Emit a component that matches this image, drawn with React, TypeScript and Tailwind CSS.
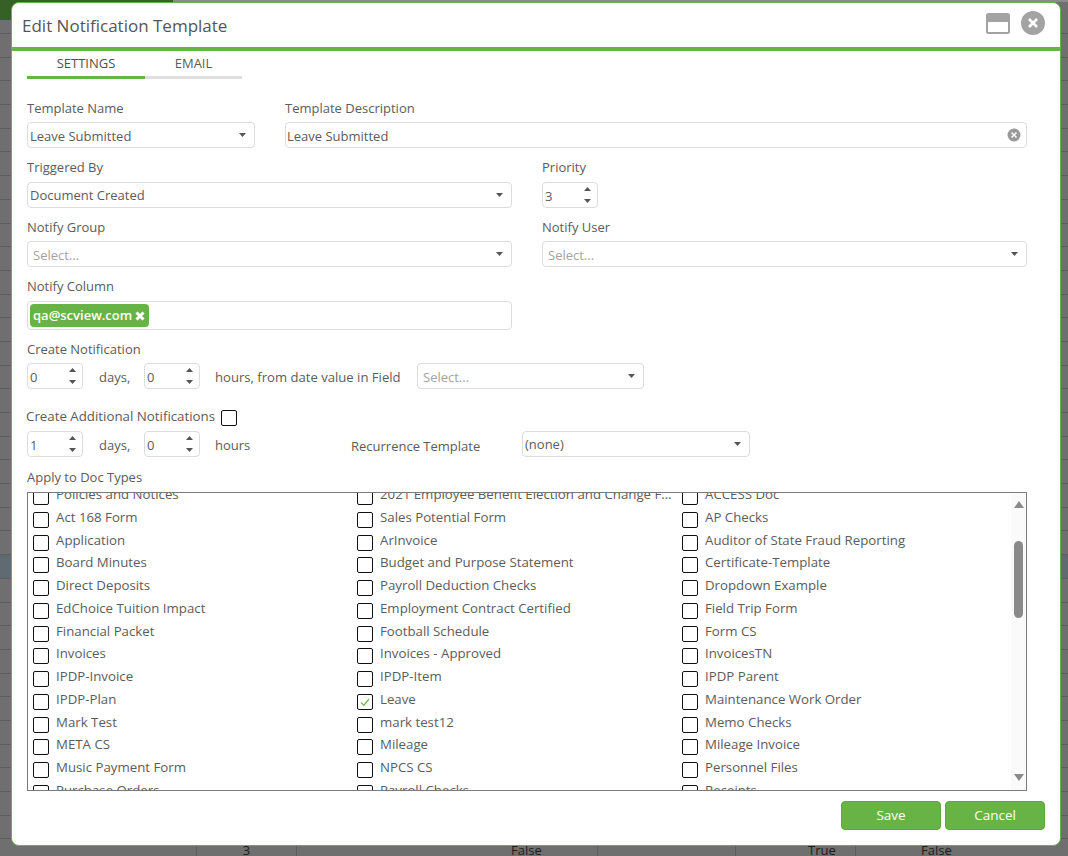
import React from "react";

const docTypes: string[][] = [
  ["Policies and Notices", "2021 Employee Benefit Election and Change Form", "ACCESS Doc"],
  ["Act 168 Form", "Sales Potential Form", "AP Checks"],
  ["Application", "ArInvoice", "Auditor of State Fraud Reporting"],
  ["Board Minutes", "Budget and Purpose Statement", "Certificate-Template"],
  ["Direct Deposits", "Payroll Deduction Checks", "Dropdown Example"],
  ["EdChoice Tuition Impact", "Employment Contract Certified", "Field Trip Form"],
  ["Financial Packet", "Football Schedule", "Form CS"],
  ["Invoices", "Invoices - Approved", "InvoicesTN"],
  ["IPDP-Invoice", "IPDP-Item", "IPDP Parent"],
  ["IPDP-Plan", "Leave", "Maintenance Work Order"],
  ["Mark Test", "mark test12", "Memo Checks"],
  ["META CS", "Mileage", "Mileage Invoice"],
  ["Music Payment Form", "NPCS CS", "Personnel Files"],
  ["Purchase Orders", "Payroll Checks", "Receipts"],
];

function Caret() {
  return (
    <svg width="7" height="4" viewBox="0 0 7 4" className="shrink-0">
      <path d="M0 0h7L3.500 4z" fill="#555" />
    </svg>
  );
}

function Select({
  value,
  placeholder,
  className,
  textClass = "mt-[4px]",
}: {
  value?: string;
  placeholder?: string;
  className: string;
  textClass?: string;
}) {
  return (
    <div className={`flex h-[26px] items-center justify-between rounded-[4px] border border-[#dcdcdc] bg-white pl-[2px] pr-[8px] ${className}`}>
      {value ? <span className={textClass}>{value}</span> : <span className="mt-[4px] pl-[3px] text-[#a3a3a3]">{placeholder}</span>}
      <Caret />
    </div>
  );
}

function Spinner({ value, className = "w-[56px]" }: { value: string; className?: string }) {
  return (
    <div className={`flex h-[26px] items-center justify-between rounded-[4px] border border-[#dcdcdc] bg-white pl-[2px] pr-[6px] ${className}`}>
      <span className="mt-[4px]">{value}</span>
      <div className="flex flex-col gap-[8px]">
        <svg width="7" height="4" viewBox="0 0 7 4" className="block">
          <path d="M0 4h7L3.500 0z" fill="#555" />
        </svg>
        <svg width="7" height="4" viewBox="0 0 7 4" className="block">
          <path d="M0 0h7L3.500 4z" fill="#555" />
        </svg>
      </div>
    </div>
  );
}

function Label({ children }: { children: React.ReactNode }) {
  return <div className="h-[20px] leading-[20px]">{children}</div>;
}

function CheckBox({ checked }: { checked?: boolean }) {
  return (
    <div className="flex h-[16px] w-[16px] shrink-0 items-center justify-center rounded-[2px] border border-[#111] bg-white">
      {checked && (
        <svg width="12" height="12" viewBox="0 0 12 12">
          <path d="M2 6.500l2.800 2.800L10 3" fill="none" stroke="#68b346" strokeWidth="1.200" />
        </svg>
      )}
    </div>
  );
}

function DocTypeList() {
  return (
    <div className="flex h-[299px] w-[1000px] overflow-hidden border border-[#7b7b7b]">
      <div className="mt-[-9px] h-[330px] w-[983px] pl-[5px] text-[13.250px]">
        {docTypes.map((row) => (
          <div key={row[0]} className="grid h-[22.750px] grid-cols-[324px_325px_324px]">
            {row.map((name) => (
              <div key={name} className="flex items-start">
                <div className="mt-[5px]">
                  <CheckBox checked={name === "Leave"} />
                </div>
                <span className="ml-[7px] w-[293px] truncate leading-[20px]">{name}</span>
              </div>
            ))}
          </div>
        ))}
      </div>
      <div className="flex w-[15px] flex-col items-center bg-[#fafafa] pt-[8px]">
        <svg width="10" height="7" viewBox="0 0 10 7">
          <path d="M0 7h10L5 0z" fill="#8a8a8a" />
        </svg>
        <div className="mt-[33px] h-[77px] w-[9px] rounded-full bg-[#8a8a8a]" />
        <div className="mt-[156px]">
          <svg width="10" height="7" viewBox="0 0 10 7">
            <path d="M0 0h10L5 7z" fill="#8a8a8a" />
          </svg>
        </div>
      </div>
    </div>
  );
}

function Backdrop() {
  const rows = Array.from({ length: 35 }, (_, i) => i);
  return (
    <div className="h-full w-full bg-[#6f6f6f]">
      <div className="flex h-[20px]">
        <div className="h-[20px] w-[173px] bg-[#356026]" />
        <div className="h-[2px] flex-1 bg-[#8b8b8b]" />
      </div>
      <div className="h-[13px]" />
      {rows.map((i) => (
        <div
          key={i}
          className={i === 22 ? "h-[23.700px] border-t border-[#5d5d5d] bg-[#5f6b70]" : "h-[23.700px] border-t border-[#5d5d5d]"}
        />
      ))}
    </div>
  );
}

function BackdropBottomRow() {
  return (
    <div className="absolute bottom-0 left-0 flex h-[11px] w-full bg-[#6f6f6f] text-[13px] leading-[11px] text-[#1c1c1c]">
      <div className="w-[197px] border-r border-[#5d5d5d]" />
      <div className="w-[100px] border-r border-[#5d5d5d] text-center">3</div>
      <div className="w-[301px] border-r border-[#5d5d5d] pl-[214px]">False</div>
      <div className="w-[138px] border-r border-[#5d5d5d]" />
      <div className="w-[120px] border-r border-[#5d5d5d] pl-[72px]">True</div>
      <div className="w-[92px] border-r border-[#5d5d5d] pl-[65px]">False</div>
    </div>
  );
}

export default function App() {
  return (
    <div
      className="relative h-[856px] w-[1068px] overflow-hidden text-[13px] text-[#5c5c5c]"
      style={{ fontFamily: '"Open Sans", "Noto Sans", sans-serif' }}
    >
      <Backdrop />
      <BackdropBottomRow />

      <div className="absolute left-[11px] top-[2px] flex h-[844px] w-[1050px] flex-col rounded-[8px] border border-[#68b346] bg-white">
        <div className="flex h-[48px] shrink-0 items-center justify-between border-b-[4px] border-[#68b346] pl-[10px] pr-[15px]">
          <span className="mt-[2px] text-[17px] text-[#555]">Edit Notification Template</span>
          <div className="mt-[-4px] flex items-center gap-[11px]">
            <svg width="24" height="21" viewBox="0 0 24 21">
              <rect x="0" y="0" width="24" height="21" rx="2.500" fill="#a3a3a3" />
              <rect x="2" y="9" width="20" height="10" fill="#fff" />
            </svg>
            <svg width="24" height="24" viewBox="0 0 24 24">
              <circle cx="12" cy="12" r="12" fill="#a3a3a3" />
              <path d="M8 8l8 8M16 8l-8 8" stroke="#fff" strokeWidth="2.600" />
            </svg>
          </div>
        </div>

        <div className="flex-1 px-[15px]">
          <div className="flex h-[28px] w-[215px] border-b-[3px] border-[#dedede]">
            <div className="mb-[-3px] w-[118px] border-b-[3px] border-[#68b346] pt-[3px] text-center leading-[18px] text-[#4f4f4f]">SETTINGS</div>
            <div className="w-[97px] pt-[3px] text-center leading-[18px]">EMAIL</div>
          </div>

          <div className="mt-[19px] flex gap-[30px]">
            <div className="w-[228px]">
              <Label>Template Name</Label>
              <Select value="Leave Submitted" className="mt-[4px] w-full" />
            </div>
            <div className="w-[742px]">
              <Label>Template Description</Label>
              <div className="mt-[4px] flex h-[26px] items-center justify-between rounded-[4px] border border-[#dcdcdc] pl-[1px] pr-[5px]">
                <span className="mt-[4px]">Leave Submitted</span>
                <svg width="14" height="14" viewBox="0 0 14 14">
                  <circle cx="7" cy="7" r="6.500" fill="#9a9a9a" />
                  <path d="M4.500 4.500l5 5M9.500 4.500l-5 5" stroke="#fff" strokeWidth="1.500" />
                </svg>
              </div>
            </div>
          </div>

          <div className="mt-[9px] flex gap-[30px]">
            <div className="w-[485px]">
              <Label>Triggered By</Label>
              <Select value="Document Created" textClass="mt-[2px]" className="mt-[5px] w-full" />
            </div>
            <div>
              <Label>Priority</Label>
              <div className="mt-[5px]">
                <Spinner value="3" />
              </div>
            </div>
          </div>

          <div className="mt-[9px] flex gap-[30px]">
            <div className="w-[485px]">
              <Label>Notify Group</Label>
              <Select placeholder="Select..." className="mt-[4px] w-full" />
            </div>
            <div className="w-[485px]">
              <Label>Notify User</Label>
              <Select placeholder="Select..." className="mt-[4px] w-full" />
            </div>
          </div>

          <div className="mt-[9px]">
            <Label>Notify Column</Label>
            <div className="mt-[5px] flex h-[29px] w-[485px] items-center rounded-[4px] border border-[#dcdcdc] pl-[2px]">
              <div className="flex h-[23px] w-[119px] items-center gap-[3px] rounded-[4px] bg-[#68b346] pl-[3px] font-semibold text-white">
                <span>qa@scview.com</span>
                <svg width="10" height="10" viewBox="0 0 10 10">
                  <path d="M1.500 1.500l7 7M8.500 1.500l-7 7" stroke="#fff" strokeWidth="3" />
                </svg>
              </div>
            </div>
          </div>

          <div className="mt-[9px]">
            <Label>Create Notification</Label>
            <div className="mt-[4px] flex h-[26px] items-center">
              <Spinner value="0" />
              <span className="ml-[16px] mt-[4px] w-[45px]">days,</span>
              <Spinner value="0" />
              <span className="ml-[15px] mt-[4px] w-[202px] text-[13.100px]">hours, from date value in Field</span>
              <Select placeholder="Select..." className="w-[227px]" />
            </div>
          </div>

          <div className="ml-[-1px] mt-[17px] flex h-[20px] items-center gap-[6px]">
            <span className="text-[13.300px] leading-[20px]">Create Additional Notifications</span>
            <div className="mt-[3px]">
              <CheckBox />
            </div>
          </div>

          <div className="mt-[5px] flex h-[26px] items-center">
            <Spinner value="1" />
            <span className="ml-[16px] mt-[4px] w-[45px]">days,</span>
            <Spinner value="0" />
            <span className="ml-[15px] mt-[4px] w-[136px]">hours</span>
            <span className="w-[171px] pt-[5px]">Recurrence Template</span>
            <Select value="(none)" textClass="mt-[2px]" className="w-[228px]" />
          </div>

          <div className="mt-[10px]">
            <Label>Apply to Doc Types</Label>
            <div className="mt-[5px]">
              <DocTypeList />
            </div>
          </div>

          <div className="mt-[10px] flex justify-end gap-[4px]">
            <button className="h-[29px] w-[100px] rounded-[4px] border border-[#5fa63f] bg-[#68b346] text-[13.500px] font-medium text-white">Save</button>
            <button className="h-[29px] w-[100px] rounded-[4px] border border-[#5fa63f] bg-[#68b346] text-[13.500px] font-medium text-white">Cancel</button>
          </div>
        </div>
      </div>
    </div>
  );
}
